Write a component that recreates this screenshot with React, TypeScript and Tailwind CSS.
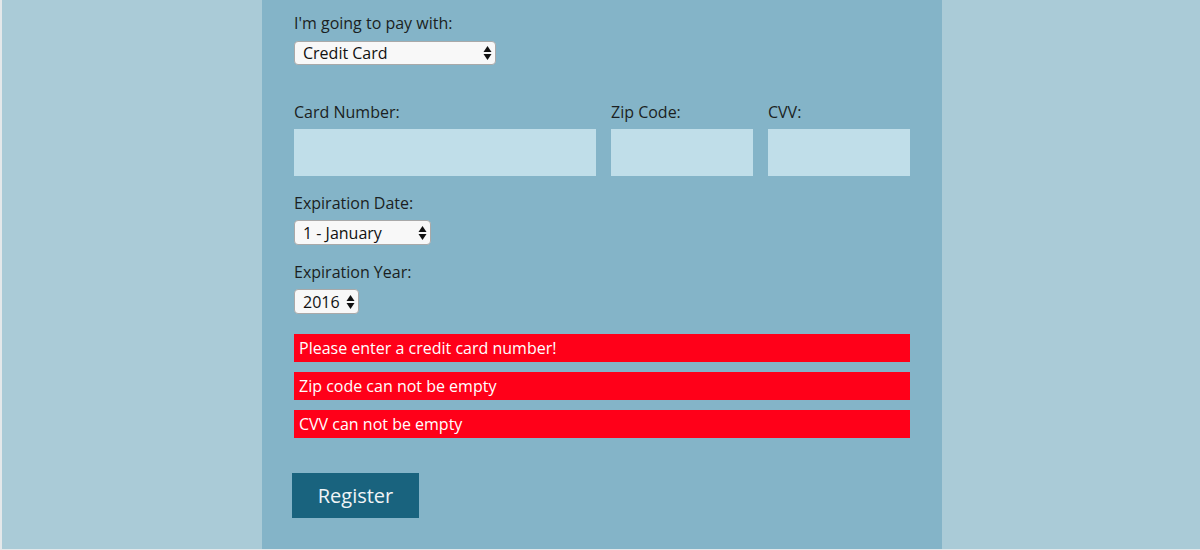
import React from "react";

const font = { fontFamily: "'Open Sans', 'Noto Sans', sans-serif" };

function Arrows() {
  return (
    <svg width="9" height="15" viewBox="0 0 9 15" className="absolute right-[3px] top-1/2 -translate-y-1/2">
      <path d="M4.5 0.5 L8.5 6.5 L0.5 6.5 Z" fill="#111" />
      <path d="M4.5 14.5 L8.5 8.5 L0.5 8.5 Z" fill="#111" />
    </svg>
  );
}

function FakeSelect({ value, w, h }: { value: string; w: string; h: string }) {
  return (
    <div className={`relative ${w} ${h} bg-[#f8f8f8] border border-[#a9a9a9] rounded-[4px] flex items-center pl-[8px] text-[16px] text-[#111]`}>
      <span>{value}</span>
      <Arrows />
    </div>
  );
}

export default function App() {
  return (
    <div className="h-[550px] w-[1200px] bg-[#aacbd7] flex justify-center border-l-2 border-b border-[#e4e8ea] overflow-hidden" style={font}>
      <div className="w-[680px] ml-[2px] bg-[#84b4c8] pl-[32px] pr-[32px] pt-[11px] text-[#1b1f22] text-[16px]">
        <div className="h-6 leading-6">I'm going to pay with:</div>
        <div className="mt-[6px]">
          <FakeSelect value="Credit Card" w="w-[202px]" h="h-[24px]" />
        </div>

        <div className="mt-[35px] flex gap-[15px]">
          <div className="w-[302px]">
            <div className="h-6 leading-6">Card Number:</div>
            <div className="mt-[5px] h-[47px] bg-[#c0dee9]" />
          </div>
          <div className="w-[142px]">
            <div className="h-6 leading-6">Zip Code:</div>
            <div className="mt-[5px] h-[47px] bg-[#c0dee9]" />
          </div>
          <div className="w-[142px]">
            <div className="h-6 leading-6">CVV:</div>
            <div className="mt-[5px] h-[47px] bg-[#c0dee9]" />
          </div>
        </div>

        <div className="mt-[15px] h-6 leading-6">Expiration Date:</div>
        <div className="mt-[5px]">
          <FakeSelect value="1 - January" w="w-[137px]" h="h-[25px]" />
        </div>

        <div className="mt-[15px] h-6 leading-6">Expiration Year:</div>
        <div className="mt-[5px]">
          <FakeSelect value="2016" w="w-[65px]" h="h-[25px]" />
        </div>

        <div className="mt-[20px] flex flex-col gap-[10px] w-[616px]">
          {["Please enter a credit card number!", "Zip code can not be empty", "CVV can not be empty"].map((t) => (
            <div key={t} className="h-[28px] bg-[#ff0019] text-white pl-[5px] leading-[28px]">
              {t}
            </div>
          ))}
        </div>

        <button className="mt-[35px] ml-[-2px] w-[127px] h-[45px] bg-[#19637e] text-[#f0f4f6] text-[20px]">
          Register
        </button>
      </div>
    </div>
  );
}
